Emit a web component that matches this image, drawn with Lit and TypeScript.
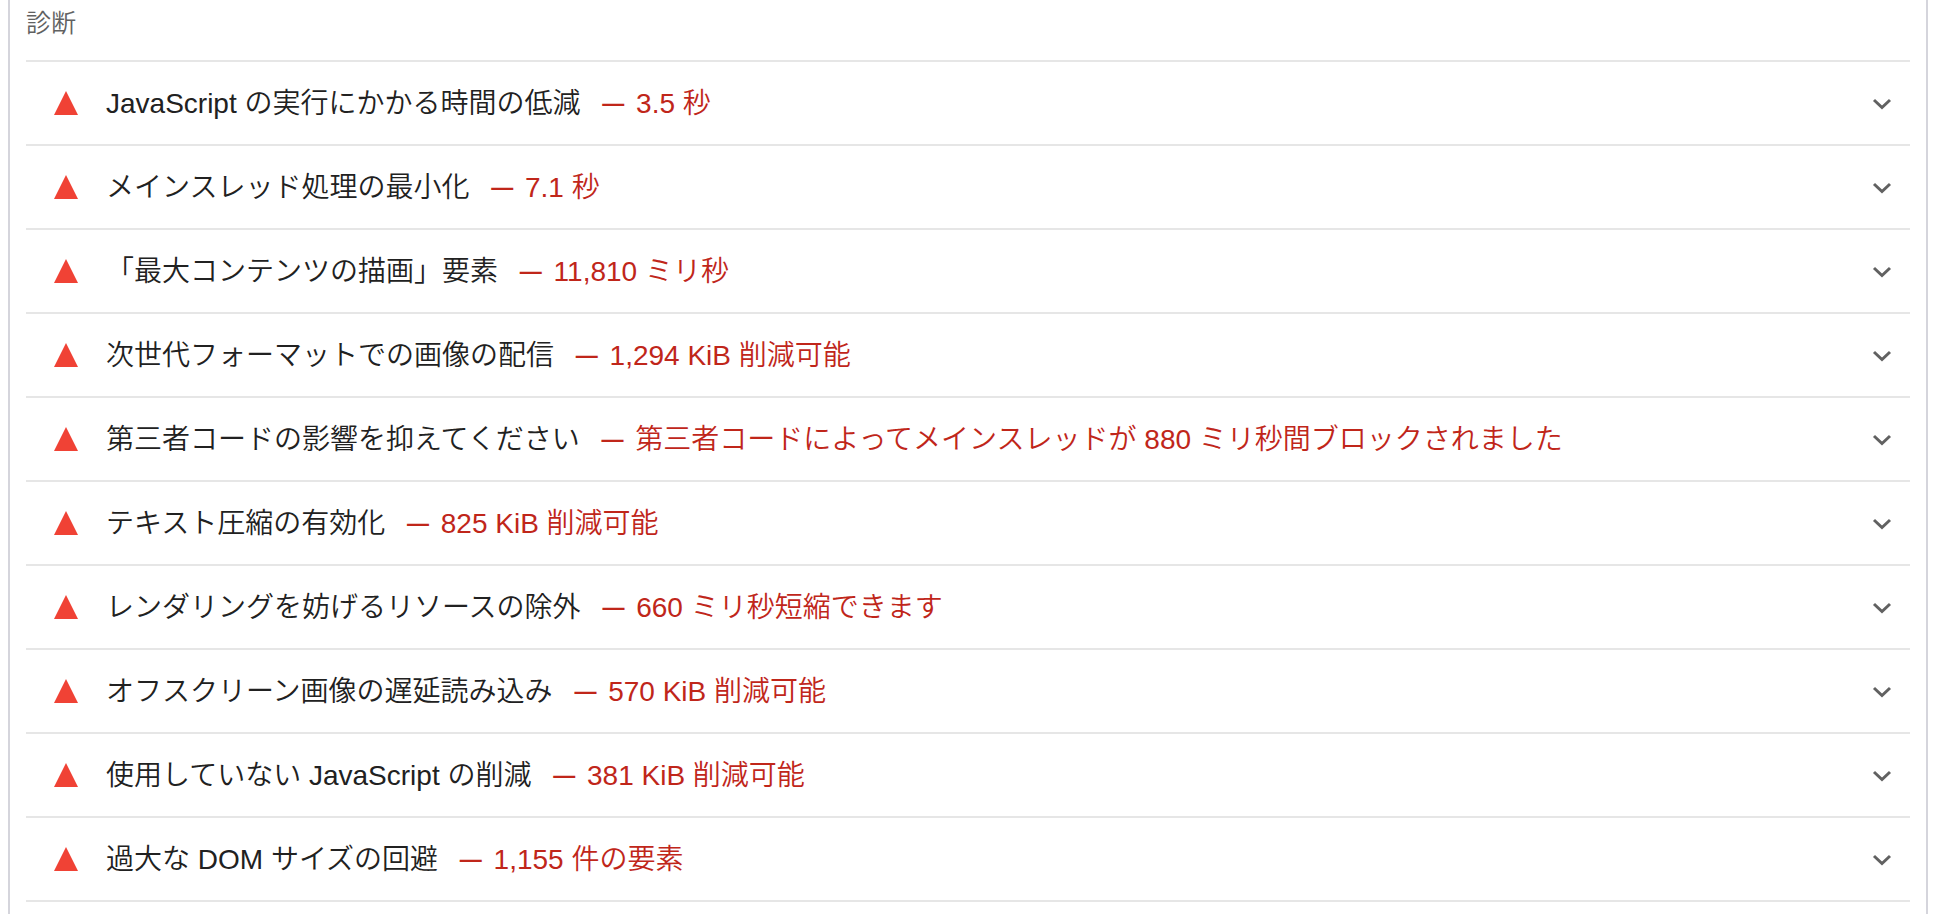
import { LitElement, html, css } from "lit";
import { customElement } from "lit/decorators.js";

interface Audit {
  title: string;
  value: string;
}

const AUDITS: Audit[] = [
  { title: "JavaScript の実行にかかる時間の低減", value: "3.5 秒" },
  { title: "メインスレッド処理の最小化", value: "7.1 秒" },
  { title: "「最大コンテンツの描画」要素", value: "11,810 ミリ秒" },
  { title: "次世代フォーマットでの画像の配信", value: "1,294 KiB 削減可能" },
  {
    title: "第三者コードの影響を抑えてください",
    value: "第三者コードによってメインスレッドが 880 ミリ秒間ブロックされました",
  },
  { title: "テキスト圧縮の有効化", value: "825 KiB 削減可能" },
  { title: "レンダリングを妨げるリソースの除外", value: "660 ミリ秒短縮できます" },
  { title: "オフスクリーン画像の遅延読み込み", value: "570 KiB 削減可能" },
  { title: "使用していない JavaScript の削減", value: "381 KiB 削減可能" },
  { title: "過大な DOM サイズの回避", value: "1,155 件の要素" },
];

@customElement("app-root")
export class AppRoot extends LitElement {
  static styles = css`
    :host {
      display: block;
      box-sizing: border-box;
      padding: 0 8px;
      background: #fff;
      color: #212121;
      font-family: "Liberation Sans", "Noto Sans CJK JP", sans-serif;
      font-size: 28px;
      font-weight: 350;
      line-height: 40px;
    }
    .report {
      box-sizing: border-box;
      min-height: 100vh;
      padding: 0 16px;
      border: solid #d5d5dc;
      border-width: 0 2px;
    }
    .group-title {
      margin: 0;
      padding: 5px 0 19px;
      color: #616161;
      font-size: 25px;
      font-weight: 350;
      line-height: 36px;
    }
    .audits {
      border-bottom: 2px solid #e6e6e6;
    }
    .audit {
      border-top: 2px solid #e6e6e6;
    }
    .header {
      display: flex;
      align-items: center;
      padding: 20px 18px 20px 28px;
      list-style: none;
      cursor: pointer;
    }
    .header::-webkit-details-marker {
      display: none;
    }
    .marker {
      flex: none;
      width: 24px;
      height: 24px;
      margin-right: 28px;
      fill: #f04235;
    }
    .text {
      flex: 1;
      padding-top: 2px;
    }
    .value {
      margin-left: 10px;
      color: #c0261a;
    }
    .dash {
      padding: 0 4px;
      font-family: "Liberation Sans", sans-serif;
      font-size: 22px;
      font-weight: 700;
      line-height: 1;
      vertical-align: 2px;
    }
    .chevron {
      flex: none;
      width: 20px;
      height: 14px;
      fill: none;
      stroke: #616161;
      stroke-width: 3;
    }
    .audit[open] .chevron {
      transform: rotate(180deg);
    }
  `;

  private renderAudit(audit: Audit) {
    return html`<details class="audit">
      <summary class="header">
        <svg class="marker" viewBox="0 0 24 24" aria-hidden="true"><path d="M12 0 24 24H0z" /></svg>
        <span class="text">${audit.title} <span class="value"><span class="dash">—</span> ${audit.value}</span></span>
        <svg class="chevron" viewBox="0 0 20 14" aria-hidden="true"><path d="M2 4 10 11.5 18 4" /></svg>
      </summary>
    </details>`;
  }

  render() {
    return html`<main class="report">
      <h2 class="group-title">診断</h2>
      <div class="audits">${AUDITS.map((a) => this.renderAudit(a))}</div>
    </main>`;
  }
}
